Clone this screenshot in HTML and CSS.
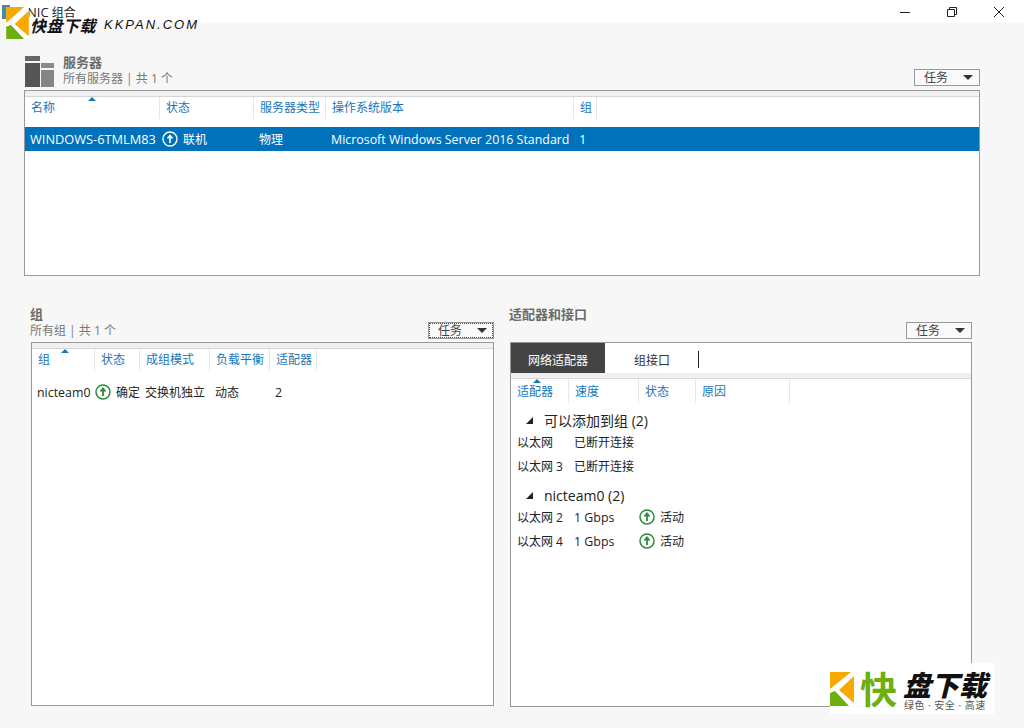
FILE: index.html
```html
<!DOCTYPE html>
<html>
<head>
<meta charset="utf-8">
<title>NIC 组合</title>
<link rel="stylesheet" href="styles.css">
</head>
<body>
<div class="titlebar">
	<span class="app_icon"></span>
	<span class="app_title"><span class="title_en">NIC</span> 组合</span>
	<div class="win_btns">
		<svg width="12" height="12" viewBox="0 0 12 12"><path d="M1 6.5H11" stroke="#222" fill="none"/></svg>
		<svg width="12" height="12" viewBox="0 0 12 12"><path d="M1.5 3.500H8.500V10.500H1.500ZM3.500 3.500V1.500H10.500V8.500H8.500" stroke="#222" fill="none"/></svg>
		<svg width="12" height="12" viewBox="0 0 12 12"><path d="M1 1L11 11M11 1L1 11" stroke="#222" fill="none"/></svg>
	</div>
</div>

<!-- 服务器 -->
<div class="server_sec">
	<div class="sec_head">
		<svg class="server_icon" width="29" height="31" viewBox="0 0 29 31">
			<path d="M0 0H15V5H0Z" fill="#666"/>
			<path d="M0 7H15V31H0Z" fill="#555"/>
			<path d="M16 7H29V12H16Z" fill="#8a8a8a"/>
			<path d="M16 14H29V31H16Z" fill="#858585"/>
		</svg>
		<div class="sec_titles">
			<div class="sec_title">服务器</div>
			<div class="sec_sub">所有服务器 | 共 1 个</div>
		</div>
		<a class="task_btn">任务<i></i></a>
	</div>
	<div class="box server_box">
		<div class="band"></div>
		<div class="grid_head server_cols">
			<span class="sorted">名称</span><span>状态</span><span>服务器类型</span><span>操作系统版本</span><span>组</span>
		</div>
		<div class="grid_row server_cols selected">
			<span class="en">WINDOWS-6TMLM83</span>
			<span class="status"><svg class="up_icon" width="16" height="16" viewBox="0 0 16 16"><circle cx="8" cy="8" r="7" fill="none" stroke="#fff" stroke-width="1.4"/><path d="M8 12V6M5.500 7.500L8 4.500L10.500 7.500" fill="none" stroke="#fff" stroke-width="1.6"/></svg>联机</span>
			<span>物理</span>
			<span class="en os_name">Microsoft Windows Server 2016 Standard</span>
			<span class="en">1</span>
		</div>
	</div>
</div>

<div class="lower">
	<!-- 组 -->
	<div class="team_sec">
		<div class="sec_head team_head">
			<div class="sec_titles">
				<div class="sec_title">组</div>
				<div class="sec_sub">所有组 | 共 1 个</div>
			</div>
			<a class="task_btn focus">任务<i></i></a>
		</div>
		<div class="box team_box">
			<div class="band"></div>
			<div class="grid_head team_cols">
				<span class="sorted">组</span><span>状态</span><span>成组模式</span><span>负载平衡</span><span>适配器</span>
			</div>
			<div class="grid_row team_cols team_row">
				<span class="en">nicteam0</span>
				<span class="status"><svg class="up_icon" width="16" height="16" viewBox="0 0 16 16"><circle cx="8" cy="8" r="7" fill="none" stroke="#2e8b3d" stroke-width="1.5"/><path d="M8 12V6M5.500 7.500L8 4.500L10.500 7.500" fill="none" stroke="#2e8b3d" stroke-width="1.8"/></svg>确定</span>
				<span>交换机独立</span>
				<span>动态</span>
				<span class="en">2</span>
			</div>
		</div>
	</div>

	<!-- 适配器和接口 -->
	<div class="adapter_sec">
		<div class="sec_head adapter_head">
			<div class="sec_titles">
				<div class="sec_title">适配器和接口</div>
			</div>
			<a class="task_btn">任务<i></i></a>
		</div>
		<div class="box adapter_box">
			<div class="tabs">
				<a class="tab active">网络适配器</a>
				<a class="tab">组接口</a>
				<span class="text_caret"></span>
			</div>
			<div class="band"></div>
			<div class="grid_head adapter_cols">
				<span class="sorted">适配器</span><span>速度</span><span>状态</span><span>原因</span>
			</div>
			<div class="group_title first"><i></i>可以添加到组 (2)</div>
			<div class="adapter_row"><span>以太网</span><span>已断开连接</span></div>
			<div class="adapter_row"><span>以太网 3</span><span>已断开连接</span></div>
			<div class="group_title"><i></i>nicteam0 (2)</div>
			<div class="adapter_row">
				<span>以太网 2</span><span class="en">1 Gbps</span>
				<span class="status"><svg class="up_icon" width="16" height="16" viewBox="0 0 16 16"><circle cx="8" cy="8" r="7" fill="none" stroke="#2e8b3d" stroke-width="1.5"/><path d="M8 12V6M5.500 7.500L8 4.500L10.500 7.500" fill="none" stroke="#2e8b3d" stroke-width="1.8"/></svg>活动</span>
			</div>
			<div class="adapter_row">
				<span>以太网 4</span><span class="en">1 Gbps</span>
				<span class="status"><svg class="up_icon" width="16" height="16" viewBox="0 0 16 16"><circle cx="8" cy="8" r="7" fill="none" stroke="#2e8b3d" stroke-width="1.5"/><path d="M8 12V6M5.500 7.500L8 4.500L10.500 7.500" fill="none" stroke="#2e8b3d" stroke-width="1.8"/></svg>活动</span>
			</div>
		</div>
	</div>
</div>

<!-- 水印 -->
<div class="mark_top">
	<svg class="mark_logo" width="23" height="32" viewBox="0 0 24 34">
		<path d="M0 0H24V34H0Z" fill="#fff"/>
		<path d="M0 0H19L0 17Z" fill="#f9a800"/>
		<path d="M24 4V31L9 18Z" fill="#f9a800"/>
		<path d="M0 21L5 19L19 34H0Z" fill="#6fae10"/>
	</svg>
	<span class="mark_cn">快盘下载</span>
	<span class="mark_en">KKPAN.COM</span>
</div>
<div class="mark_bottom">
	<svg width="24" height="34" viewBox="0 0 24 34">
		<path d="M0 0H21L0 17Z" fill="#f9a800"/>
		<path d="M24 4V31L9 18Z" fill="#f9a800"/>
		<path d="M0 21L5 19L19 34H0Z" fill="#6fae10"/>
	</svg>
	<span class="mark_kuai">快</span>
	<div class="mark_text">
		<div class="mark_big">盘下载</div>
		<div class="mark_small">绿色 · 安全 · 高速</div>
	</div>
</div>
</body>
</html>
```

FILE: styles.css
```css
html, body, div, span {
	padding: 0;
	margin: 0;
}

body {
	position: relative;
	width: 1024px;
	height: 728px;
	overflow: hidden;
	background: #f7f7f7;
	font-family: "Open Sans", "Noto Sans CJK SC", sans-serif;
	font-size: 12px;
	color: #222;
}

a {
	cursor: pointer;
}

/*标题栏*/
.titlebar {
	height: 23px;
	background: #fff;
	display: flex;
	align-items: center;
	font-size: 12px;
}

.app_icon {
	width: 8px;
	height: 14px;
	margin-left: 2px;
	background: #4d8a9c;
}

.app_title {
	margin-left: 17px;
}

.title_en {
	font-size: 13px;
}

.win_btns {
	margin-left: auto;
	display: flex;
	gap: 35px;
	padding-right: 19px;
}

/*通用*/
.sec_head {
	display: flex;
	align-items: flex-end;
}

.sec_title {
	font-size: 13px;
	font-weight: bold;
	color: #6b6b6b;
	line-height: 14px;
	margin-bottom: 2px;
}

.sec_sub {
	color: #777;
	line-height: 16px;
}

.task_btn {
	margin-left: auto;
	box-sizing: border-box;
	width: 66px;
	height: 17px;
	border: 1px solid #999;
	background: #fafafa;
	display: flex;
	align-items: center;
	padding: 0 6px 0 9px;
	color: #444;
	line-height: 15px;
}

.task_btn i {
	margin-left: auto;
	border-style: solid;
	border-width: 5px 5px 0 5px;
	border-color: #333 transparent transparent transparent;
}

.task_btn.focus {
	outline: 1px dotted #444;
	outline-offset: -2px;
}

.box {
	box-sizing: border-box;
	border: 1px solid #999;
	background: #fff;
}

.band {
	height: 5px;
	background: #f0f0f0;
	border-bottom: 1px solid #d6d6d6;
}

.grid_head, .grid_row, .adapter_row {
	display: grid;
	align-items: center;
}

.grid_head {
	height: 22px;
	color: #1a76b8;
}

.grid_head span {
	position: relative;
	height: 22px;
	line-height: 22px;
	padding-left: 6px;
	border-right: 1px solid #e6e6e6;
	box-sizing: border-box;
}

.grid_head .sorted:before {
	content: '';
	position: absolute;
	top: 0;
	left: 47%;
	border-style: solid;
	border-width: 0 4px 4px 4px;
	border-color: transparent transparent #1a76b8 transparent;
}

.grid_row span {
	padding-left: 5px;
	white-space: nowrap;
}

.en {
	font-size: 12.400px;
}

.selected .en {
	font-size: 12.800px;
}

.selected .os_name {
	font-size: 12.400px;
}

.status {
	display: flex;
	align-items: center;
}

.up_icon {
	margin-right: 5px;
}

/*服务器*/
.server_sec {
	margin: 33px 44px 0 24px;
}

.server_sec .sec_head {
	height: 30px;
	padding: 0 0 4px 1px;
}

.server_icon {
	margin-bottom: -1px;
}

.server_sec .sec_titles {
	margin-left: 9px;
	margin-bottom: -1px;
}

.server_box {
	height: 186px;
}

.server_cols {
	grid-template-columns: 135px 94px 72px 248px 23px;
}

.selected {
	margin-top: 8px;
	height: 24px;
	background: #0072bc;
	color: #fff;
}

.selected .status {
	padding-left: 2px;
}

/*组和适配器*/
.lower {
	display: flex;
	margin: 31px 0 0 30px;
}

.team_sec {
	width: 464px;
}

.team_head {
	height: 35px;
	padding-bottom: 3px;
	box-sizing: border-box;
}

.team_head .sec_titles {
	align-self: flex-start;
}

.team_box {
	height: 364px;
	margin-left: 1px;
	width: 463px;
}

.team_cols {
	grid-template-columns: 63px 45px 70px 60px 47px;
}

.team_row {
	margin-top: 9px;
	height: 24px;
}

.team_row .status {
	padding-left: 0;
}

.adapter_sec {
	width: 463px;
	margin-left: 15px;
}

.adapter_head {
	height: 35px;
	padding-bottom: 3px;
	box-sizing: border-box;
}

.adapter_head .sec_titles {
	align-self: flex-start;
}

.adapter_box {
	height: 365px;
	margin-left: 1px;
	width: 462px;
}

.tabs {
	display: flex;
	height: 30px;
	align-items: center;
}

.tab {
	height: 30px;
	line-height: 35px;
	color: #333;
}

.tab.active {
	width: 94px;
	text-align: center;
	background: #444;
	color: #fff;
}

.tab:nth-child(2) {
	margin-left: 29px;
}

.text_caret {
	width: 1px;
	height: 17px;
	margin: 3px 0 0 28px;
	background: #222;
}

.adapter_cols {
	grid-template-columns: 58px 70px 57px 94px;
}

.adapter_box .grid_head {
	height: 24px;
}

.adapter_box .grid_head span {
	height: 24px;
	line-height: 25px;
}

.adapter_box .grid_head .sorted:before {
	left: 22px;
}

.group_title {
	display: flex;
	align-items: center;
	height: 20px;
	margin-top: 7px;
	font-size: 14px;
	padding-left: 15px;
}

.group_title i {
	width: 0;
	height: 0;
	margin-right: 11px;
	border-style: solid;
	border-width: 0 0 7px 7px;
	border-color: transparent transparent #222 transparent;
}

.adapter_row {
	height: 24px;
	padding-left: 6px;
	grid-template-columns: 57px 64px 64px 94px;
}

.adapter_row .status {
	padding-left: 1px;
}

/*水印*/
.mark_top {
	position: absolute;
	left: 6px;
	top: 7px;
	display: flex;
	align-items: center;
	white-space: nowrap;
}

.mark_logo {
	flex: none;
}

.mark_cn {
	font-size: 16px;
	font-weight: bold;
	font-style: italic;
	color: #111;
	margin: 3px 0 0 1px;
	letter-spacing: 0.500px;
}

.mark_en {
	font-family: "Liberation Sans", sans-serif;
	font-size: 13px;
	font-style: italic;
	letter-spacing: 2px;
	color: #111;
	margin: 3px 0 0 8px;
}

.mark_bottom {
	position: absolute;
	left: 830px;
	top: 663px;
	width: 164px;
	height: 51px;
	box-sizing: border-box;
	padding-top: 9px;
	background: rgba(255, 255, 255, 0.92);
	display: flex;
	align-items: flex-start;
}

.mark_kuai {
	font-size: 37px;
	line-height: 36px;
	font-weight: bold;
	color: #6fae10;
	margin-left: 6px;
}

.mark_text {
	margin-left: 6px;
}

.mark_big {
	font-size: 28px;
	line-height: 26px;
	font-weight: 900;
	font-style: italic;
	color: #111;
	white-space: nowrap;
}

.mark_small {
	font-size: 10px;
	line-height: 12px;
	color: #555;
	margin: 1px 0 0 1px;
	letter-spacing: 0.500px;
	white-space: nowrap;
}
```
